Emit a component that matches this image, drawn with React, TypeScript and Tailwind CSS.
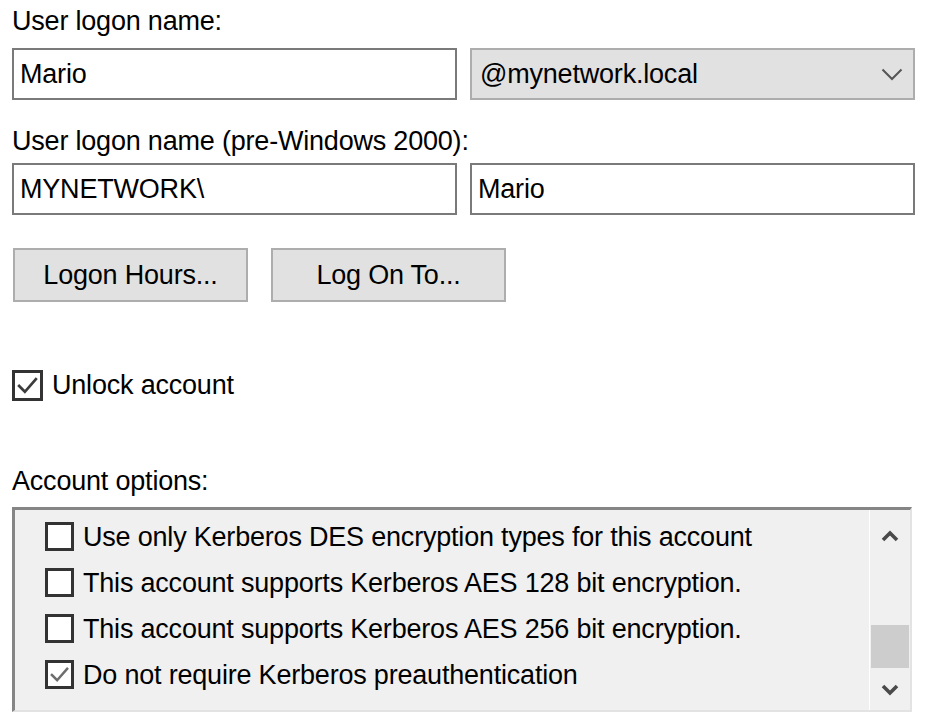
const font = "font-['Liberation_Sans',Arial,sans-serif]";

function TextBox({ value, className = "" }: { value: string; className?: string }) {
  return (
    <div
      className={`h-[52px] w-[445px] border-2 border-[#7a7a7a] bg-white pl-[6px] flex items-center text-black ${className}`}
    >
      {value}
    </div>
  );
}

function CheckBox({ checked, size = 30, light = false }: { checked: boolean; size?: number; light?: boolean }) {
  return (
    <div
      className="shrink-0 border-[3px] border-[#333333] bg-white flex items-center justify-center"
      style={{ width: size, height: size }}
    >
      {checked && (
        <svg width={size - 8} height={size - 8} viewBox="0 0 22 22" fill="none">
          <path
            d="M3 11.5 L8.5 17 L19 5"
            stroke={light ? "#6e6e6e" : "#3c3c3c"}
            strokeWidth="2.6"
            strokeLinecap="square"
          />
        </svg>
      )}
    </div>
  );
}

function Chevron({ up = false }: { up?: boolean }) {
  return (
    <svg width="18" height="12" viewBox="0 0 18 12" fill="none">
      <path
        d={up ? "M2 10 L9 3 L16 10" : "M2 2 L9 9 L16 2"}
        stroke="#4a4a4a"
        strokeWidth="3.6"
      />
    </svg>
  );
}

const options = [
  { label: "Use only Kerberos DES encryption types for this account", checked: false },
  { label: "This account supports Kerberos AES 128 bit encryption.", checked: false },
  { label: "This account supports Kerberos AES 256 bit encryption.", checked: false },
  { label: "Do not require Kerberos preauthentication", checked: true },
];

export default function App() {
  return (
    <div className={`${font} w-[926px] h-[724px] bg-white text-[27px] leading-[32px] text-black pl-[12px] overflow-hidden tracking-[-0.2px]`}>
      <div className="h-[48px] pt-[5px]">User logon name:</div>

      <div className="flex gap-[13px]">
        <TextBox value="Mario" />
        <div className="h-[52px] w-[445px] border-2 border-[#adadad] bg-[#e1e1e1] pl-[8px] pr-[10px] flex items-center justify-between">
          <span>@mynetwork.local</span>
          <svg width="22" height="13" viewBox="0 0 22 13" fill="none">
            <path d="M1.5 1.5 L11 11 L20.5 1.5" stroke="#555555" strokeWidth="2" />
          </svg>
        </div>
      </div>

      <div className="h-[63px] pt-[25px]">User logon name (pre-Windows 2000):</div>

      <div className="flex gap-[13px]">
        <TextBox value="MYNETWORK\" />
        <TextBox value="Mario" />
      </div>

      <div className="flex gap-[23px] mt-[33px] ml-[1px]">
        <button className="h-[54px] w-[235px] border-2 border-[#adadad] bg-[#e1e1e1] text-black">
          Logon Hours...
        </button>
        <button className="h-[54px] w-[235px] border-2 border-[#adadad] bg-[#e1e1e1] text-black">
          Log On To...
        </button>
      </div>

      <div className="flex items-center gap-[9px] mt-[67px] h-[32px]">
        <CheckBox checked size={31} />
        <span>Unlock account</span>
      </div>

      <div className="h-[106px] pt-[64px]">Account options:</div>

      <div className="w-[900px] h-[205px] bg-[#f0f0f0] border-t-[3px] border-l-[3px] border-[#858585] border-r-2 border-r-[#e3e3e3] border-b-2 border-b-[#e3e3e3] flex">
        <div className="flex-1 pt-[12px] pl-[30px] flex flex-col gap-[17px]">
          {options.map((o) => (
            <div key={o.label} className="flex items-center gap-[9px] h-[29px]">
              <CheckBox checked={o.checked} size={29} light />
              <span>{o.label}</span>
            </div>
          ))}
        </div>
        <div className="w-[41px] border-l border-white flex flex-col items-center pt-[20px] pb-[14px]">
          <Chevron up />
          <div className="flex-1 w-full flex flex-col justify-end pb-[16px] px-[1px]">
            <div className="h-[43px] w-full bg-[#cdcdcd]" />
          </div>
          <Chevron />
        </div>
      </div>
    </div>
  );
}
